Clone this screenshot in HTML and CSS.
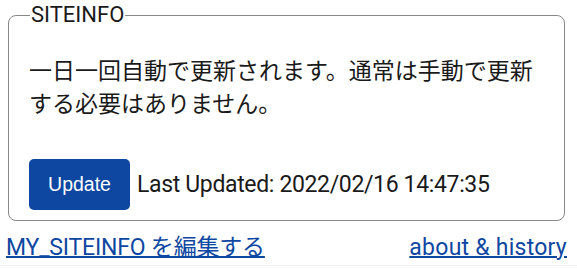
FILE: index.html
```html
<!DOCTYPE html>
<html lang="ja">
<head>
  <meta charset="UTF-8">
  <title>SITEINFO</title>
  <link rel="stylesheet" href="styles.css">
</head>
<body>

  <fieldset class="siteinfo">
    <legend>SITEINFO</legend>
    <p class="note">一日一回自動で更新されます。通常は手動で更新する必要はありません。</p>
    <div class="update-row">
      <button type="button" class="update-btn">Update</button>
      <span class="last-updated">Last Updated: 2022/02/16 14:47:35</span>
    </div>
  </fieldset>

  <div class="links">
    <a href="#" class="edit-link">MY_SITEINFO を編集する</a>
    <a href="#" class="about-link">about &amp; history</a>
  </div>
  <div class="page-end"></div>

</body>
</html>
```

FILE: styles.css
```css
/* ─── Base ─── */
body {
  font-family: 'Roboto', 'Noto Sans CJK JP', sans-serif;
  font-size: 23px;
  color: #1a1a1a;
  background: #fff;
  margin: 0;
  padding: 0 10px 0 6px;
}

/* ─── SITEINFO box ─── */
.siteinfo {
  margin: 0 2px;
  padding: 25px 20px 10px;
  border: 1px solid #888;
  border-radius: 8px;
}
.siteinfo legend {
  font-size: 22px;
  padding: 0 1px;
  margin-left: 1px;
  line-height: 30px;
}
.note {
  margin: 0 0 38px;
  line-height: 33px;
}

.update-row { display: flex; align-items: center; gap: 7px; }
.update-btn {
  width: 101px; height: 51px;
  background: #0d47a1; color: #fff;
  border: none; border-radius: 5px;
  font-family: 'Liberation Sans', Arial, sans-serif;
  font-size: 19.5px;
  cursor: pointer;
}
.last-updated { letter-spacing: -0.35px; }

/* ─── Footer links ─── */
.links {
  display: flex; justify-content: space-between;
  margin-top: 12px;
  line-height: 30px;
}
.links a {
  color: #0d47a1;
  text-decoration-thickness: 1.5px;
}
.edit-link { letter-spacing: -0.2px; }
.about-link { letter-spacing: 0.25px; }

.page-end {
  margin: 2px -10px 0 -6px;
  border-top: 1px solid #eee;
}
```
